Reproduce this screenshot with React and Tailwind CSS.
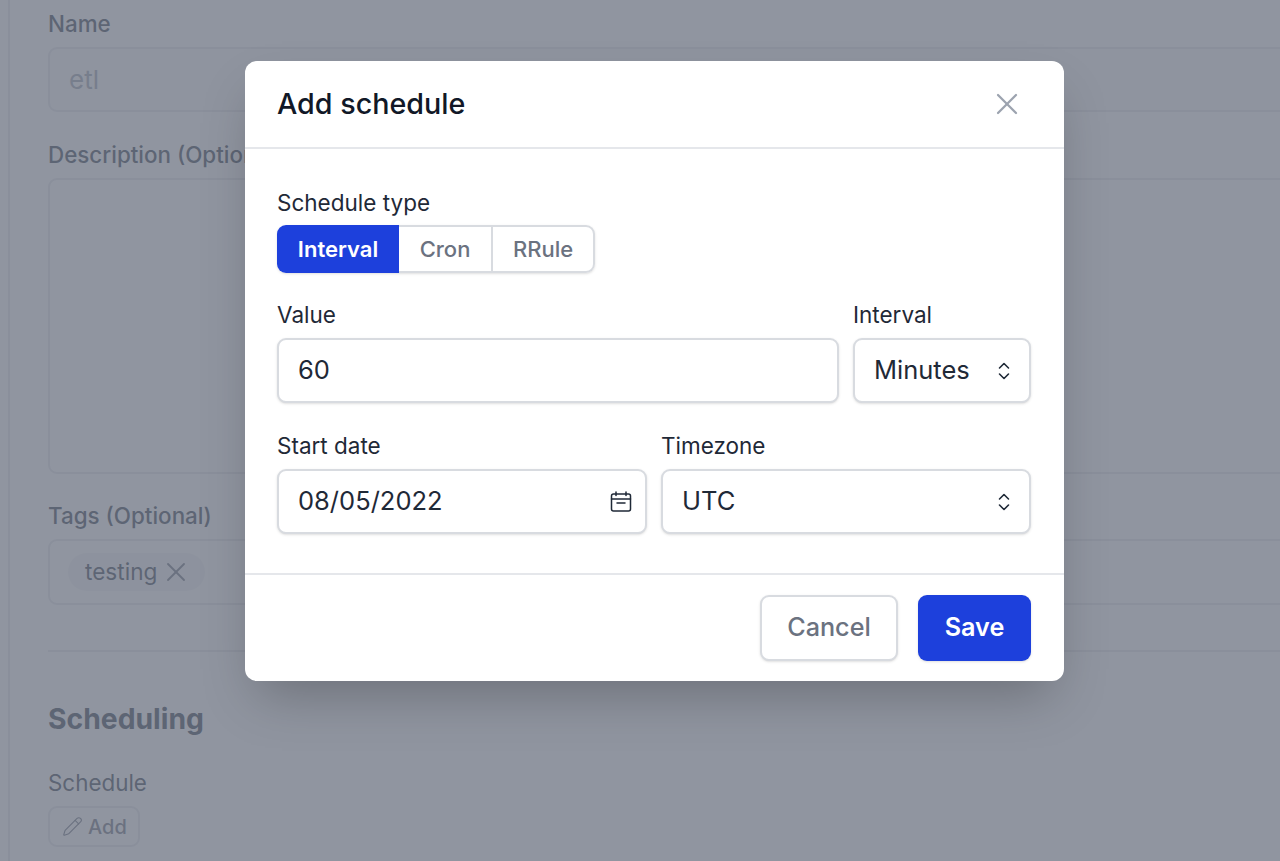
import React from 'react'
import { X, Pencil } from 'lucide-react'

function Chevrons() {
  return (
    <svg width="14" height="20" viewBox="0 0 14 20" fill="none" stroke="#1f2937" strokeWidth="1.6" strokeLinecap="round" strokeLinejoin="round">
      <path d="M2.5 7 7 2.5 11.5 7" />
      <path d="M2.5 13 7 17.5 11.5 13" />
    </svg>
  )
}

function CalendarIcon() {
  return (
    <svg width="22" height="22" viewBox="0 0 22 22" fill="none" stroke="#1f2937" strokeWidth="1.5" strokeLinecap="round" strokeLinejoin="round">
      <rect x="1.5" y="3" width="19" height="17" rx="2" />
      <path d="M6 1v3.5M16 1v3.5M1.5 8h19M7 12h8" />
    </svg>
  )
}

function Field({ label, className, children }) {
  return (
    <div className={className}>
      <label className="block h-[23px] text-[22.5px] leading-[21px] font-normal text-[#1f2937]">{label}</label>
      {children}
    </div>
  )
}

function Box({ children, className = '' }) {
  return (
    <div className={`mt-[11px] flex h-[65px] items-center justify-between rounded-[9px] border-2 border-[#d8dbe0] bg-white text-[25.5px] text-[#1f2937] shadow-sm ${className}`}>
      {children}
    </div>
  )
}

function Background() {
  return (
    <div className="h-[861px] w-[1280px] overflow-hidden bg-white pl-[8px] text-[#374151]">
      <div className="h-full border-l-2 border-[#e5e7eb] pl-[38px]">
        <div className="w-[1400px] pt-[13px]">
          <div className="h-[23px] text-[22.4px] leading-[21px] font-medium">Name</div>
          <div className="mt-[11px] flex h-[65px] items-center rounded-[9px] border-2 border-[#e5e7eb] bg-[#fafafa] pl-[19px] text-[26px] text-[#9ca3af]">etl</div>
          <div className="mt-[32px] h-[23px] text-[22.4px] leading-[21px] font-medium">Description (Optional)</div>
          <div className="mt-[11px] h-[296px] rounded-[9px] border-2 border-[#e5e7eb]" />
          <div className="mt-[31px] h-[23px] text-[22.4px] leading-[21px] font-medium">Tags (Optional)</div>
          <div className="mt-[11px] flex h-[66px] items-center rounded-[9px] border-2 border-[#e5e7eb] pl-[18px]">
            <span className="flex h-[38px] w-[137px] items-center gap-[3px] rounded-full bg-[#f3f4f6] pl-[17px] text-[22.6px] text-[#374151]">
              testing
              <X size={32} strokeWidth={1.4} className="text-[#6b7280]" />
            </span>
          </div>
          <div className="mt-[45px] h-[2px] bg-[#e5e7eb]" />
          <div className="mt-[49px] h-[36px] text-[28.3px] leading-[36px] font-bold text-[#374151]">Scheduling</div>
          <div className="mt-[35px] h-[23px] text-[22.4px] leading-[21px] font-normal">Schedule</div>
          <div className="mt-[11px] flex h-[41px] w-[92px] items-center gap-[5px] rounded-[9px] border-2 border-[#e5e7eb] pl-[12px] text-[20px] font-medium text-[#6b7280]">
            <Pencil size={21} strokeWidth={1.3} />
            Add
          </div>
        </div>
      </div>
    </div>
  )
}

export default function App() {
  return (
    <div className="relative h-[861px] w-[1280px] overflow-hidden" style={{ fontFamily: 'Inter, sans-serif' }}>
      <Background />
      <div className="absolute inset-0 bg-[#6b7280]/75" />

      <div className="absolute top-[61px] left-[245px] flex h-[620px] w-[819px] flex-col rounded-[12px] bg-white shadow-2xl">
        <div className="flex h-[88px] items-center justify-between border-b-2 border-[#e5e7eb] pr-[39px] pl-[32px]">
          <h2 className="text-[28.7px] font-medium text-[#111827]">Add schedule</h2>
          <X size={36} strokeWidth={1.5} className="text-[#9ca3af]" />
        </div>

        <div className="flex flex-1 flex-col border-b-2 border-[#e5e7eb] pt-[43px] pr-[33px] pl-[32px]">
          <Field label="Schedule type">
            <div className="mt-[10px] flex h-[48px] w-[318px] rounded-[9px] text-[22px] font-medium shadow-sm">
              <div className="flex w-[122px] items-center justify-center rounded-l-[9px] bg-[#1d40dc] font-semibold text-white">Interval</div>
              <div className="flex w-[94px] items-center justify-center border-y-2 border-r-2 border-[#d8dbe0] bg-white text-[#6b7280]">Cron</div>
              <div className="flex flex-1 items-center justify-center rounded-r-[9px] border-y-2 border-r-2 border-[#d8dbe0] bg-white text-[#6b7280]">RRule</div>
            </div>
          </Field>

          <div className="mt-[31px] flex gap-[14px]">
            <Field label="Value" className="w-[562px]">
              <Box className="px-[19px]">60</Box>
            </Field>
            <Field label="Interval" className="w-[178px]">
              <Box className="pr-[18px] pl-[19px]">
                Minutes
                <Chevrons />
              </Box>
            </Field>
          </div>

          <div className="mt-[32px] flex gap-[14px]">
            <Field label="Start date" className="w-[370px]">
              <Box className="pr-[13px] pl-[19px]">
                08/05/2022
                <CalendarIcon />
              </Box>
            </Field>
            <Field label="Timezone" className="w-[370px]">
              <Box className="pr-[18px] pl-[19px]">
                UTC
                <Chevrons />
              </Box>
            </Field>
          </div>
        </div>

        <div className="flex h-[106px] items-start justify-end gap-[20px] pt-[20px] pr-[33px] pl-[32px]">
          <button className="h-[66px] w-[138px] rounded-[9px] border-2 border-[#d8dbe0] bg-white text-[25.2px] font-medium text-[#6b7280] shadow-sm">Cancel</button>
          <button className="h-[66px] w-[113px] rounded-[9px] bg-[#1d40dc] text-[25.2px] font-semibold text-white shadow-sm">Save</button>
        </div>
      </div>
    </div>
  )
}
